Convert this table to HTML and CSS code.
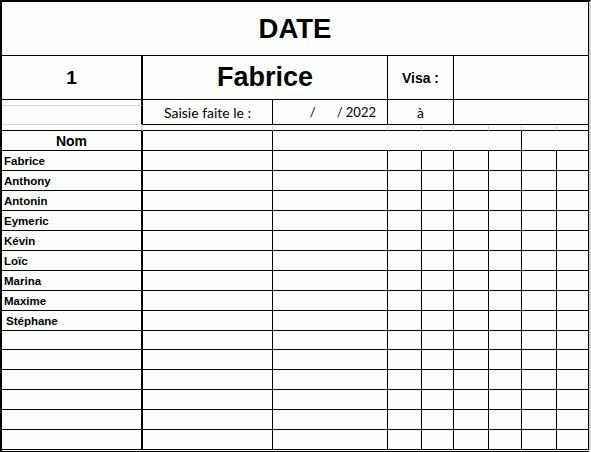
FILE: index.html
```html
<!DOCTYPE html>
<html lang="fr">
<head>
<meta charset="utf-8">
<title>Feuille de saisie</title>
<link rel="stylesheet" href="styles.css">
</head>
<body>
<div class="sheet">
  <div class="grid">
    <!-- row 1 -->
    <div class="c span-all title">DATE</div>
    <!-- row 2 -->
    <div class="c a num">1</div>
    <div class="c span-bc bigname">Fabrice</div>
    <div class="c span-2 visa">Visa :</div>
    <div class="c span-4"></div>
    <!-- row 3 -->
    <div class="c a gray-b"></div>
    <div class="c tall small">Saisie faite le :</div>
    <div class="c tall small date"><span>/</span><span>/ 2022</span></div>
    <div class="c tall span-2 small">à</div>
    <div class="c tall span-4"></div>
    <div class="c a gray-b"></div>
    <!-- row 4 (thin) -->
    <div class="c a thin"></div>
    <div class="c thin"></div>
    <div class="c thin"></div>
    <div class="c thin"></div>
    <div class="c thin"></div>
    <div class="c thin"></div>
    <div class="c thin"></div>
    <div class="c thin"></div>
    <div class="c"></div>
    <!-- row 5 -->
    <div class="c a head">Nom</div>
    <div class="c"></div>
    <div class="c span-5"></div>
    <div class="c span-2"></div>
    <!-- data rows -->
    <div class="c a nm">Fabrice</div><div class="c"></div><div class="c"></div><div class="c"></div><div class="c"></div><div class="c"></div><div class="c"></div><div class="c"></div><div class="c"></div>
    <div class="c a nm">Anthony</div><div class="c"></div><div class="c"></div><div class="c"></div><div class="c"></div><div class="c"></div><div class="c"></div><div class="c"></div><div class="c"></div>
    <div class="c a nm">Antonin</div><div class="c"></div><div class="c"></div><div class="c"></div><div class="c"></div><div class="c"></div><div class="c"></div><div class="c"></div><div class="c"></div>
    <div class="c a nm">Eymeric</div><div class="c"></div><div class="c"></div><div class="c"></div><div class="c"></div><div class="c"></div><div class="c"></div><div class="c"></div><div class="c"></div>
    <div class="c a nm">Kévin</div><div class="c"></div><div class="c"></div><div class="c"></div><div class="c"></div><div class="c"></div><div class="c"></div><div class="c"></div><div class="c"></div>
    <div class="c a nm">Loïc</div><div class="c"></div><div class="c"></div><div class="c"></div><div class="c"></div><div class="c"></div><div class="c"></div><div class="c"></div><div class="c"></div>
    <div class="c a nm">Marina</div><div class="c"></div><div class="c"></div><div class="c"></div><div class="c"></div><div class="c"></div><div class="c"></div><div class="c"></div><div class="c"></div>
    <div class="c a nm">Maxime</div><div class="c"></div><div class="c"></div><div class="c"></div><div class="c"></div><div class="c"></div><div class="c"></div><div class="c"></div><div class="c"></div>
    <div class="c a nm nm-s">Stéphane</div><div class="c"></div><div class="c"></div><div class="c"></div><div class="c"></div><div class="c"></div><div class="c"></div><div class="c"></div><div class="c"></div>
    <div class="c a"></div><div class="c"></div><div class="c"></div><div class="c"></div><div class="c"></div><div class="c"></div><div class="c"></div><div class="c"></div><div class="c"></div>
    <div class="c a"></div><div class="c"></div><div class="c"></div><div class="c"></div><div class="c"></div><div class="c"></div><div class="c"></div><div class="c"></div><div class="c"></div>
    <div class="c a"></div><div class="c"></div><div class="c"></div><div class="c"></div><div class="c"></div><div class="c"></div><div class="c"></div><div class="c"></div><div class="c"></div>
    <div class="c a"></div><div class="c"></div><div class="c"></div><div class="c"></div><div class="c"></div><div class="c"></div><div class="c"></div><div class="c"></div><div class="c"></div>
    <div class="c a"></div><div class="c"></div><div class="c"></div><div class="c"></div><div class="c"></div><div class="c"></div><div class="c"></div><div class="c"></div><div class="c"></div>
    <div class="c a"></div><div class="c"></div><div class="c"></div><div class="c"></div><div class="c"></div><div class="c"></div><div class="c"></div><div class="c"></div><div class="c"></div>
  </div>
  <div class="double"></div>
</div>
</body>
</html>
```
FILE: styles.css
```css
html, body {
  margin: 0;
  padding: 0;
  background: #fcfffc;
  overflow: hidden;
}

.sheet {
  width: 591px;
  box-sizing: border-box;
  border-top: 2px solid #000;
  border-left: 2px solid #000;
  border-right: 2px solid #d4d4d4;
  font-family: "Liberation Sans", Arial, sans-serif;
  color: #000;
}

.grid {
  display: grid;
  grid-template-columns: 141px 130px 115px 34px 32px 35px 33px 35px 32px;
  grid-template-rows: 54px 44px 6px 19px 6px 20px repeat(9, 20px) 19px repeat(5, 20px);
}

.double {
  height: 1px;
  border-bottom: 1px solid #000;
}

.c {
  box-sizing: border-box;
  border-right: 1px solid #000;
  border-bottom: 1px solid #000;
  display: flex;
  align-items: center;
  justify-content: center;
  white-space: nowrap;
  overflow: hidden;
}

.a { border-right-width: 2px; }

.span-all { grid-column: 1 / -1; }
.span-bc { grid-column: span 2; }
.span-2 { grid-column: span 2; }
.span-4 { grid-column: span 4; }
.span-5 { grid-column: span 5; }
.tall { grid-row: span 2; }

.gray-b { border-bottom-color: #d4d4d4; }
.thin { border-right-color: #d4d4d4; }
.a.thin { border-right: 2px solid #d4d4d4; }

.title {
  font-weight: bold;
  font-size: 27.5px;
}

.num {
  font-weight: bold;
  font-size: 19px;
}

.bigname {
  font-weight: bold;
  font-size: 27px;
}

.visa {
  font-weight: bold;
  font-size: 14px;
}

.small {
  font-family: Lato, "Liberation Sans", sans-serif;
  font-size: 14px;
}

.date {
  justify-content: flex-end;
  gap: 21px;
  padding-right: 11px;
  font-size: 13px;
}

.head {
  font-weight: bold;
  font-size: 14px;
}

.nm {
  justify-content: flex-start;
  padding-left: 2px;
  font-weight: bold;
  font-size: 11.5px;
}

.nm-s { padding-left: 4px; }
```
